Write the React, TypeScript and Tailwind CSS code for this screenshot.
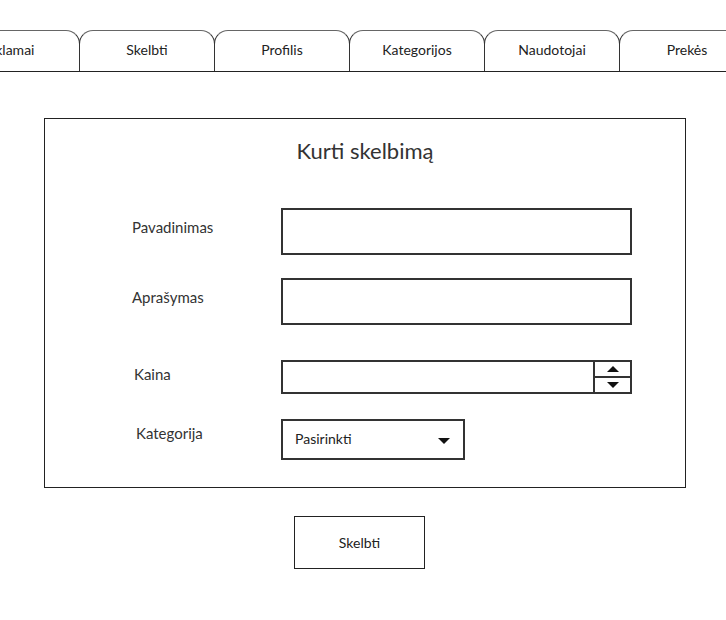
import React from "react";

const tabs = ["Reklamai", "Skelbti", "Profilis", "Kategorijos", "Naudotojai", "Prekės"];

function Tab({ label, first = false }: { label: string; first?: boolean }) {
  return (
    <div
      className={
        "-ml-px flex h-[41px] w-[136px] shrink-0 items-center justify-center rounded-t-[14px] border-x border-t border-x-[#333] border-t-[#666] pb-[3px] text-[14px] text-[#222] " +
        (first ? "pr-[10px]" : "")
      }
    >
      {label}
    </div>
  );
}

function Triangle({ down = false, className = "" }: { down?: boolean; className?: string }) {
  return (
    <svg width="12" height="6" viewBox="0 0 12 6" className={className} aria-hidden="true">
      <path d={down ? "M0 0 L12 0 L6 6 Z" : "M0 6 L12 6 L6 0 Z"} fill="#111" />
    </svg>
  );
}

export default function App() {
  return (
    <div className="h-[620px] w-[726px] overflow-hidden bg-white font-['Lato','Liberation_Sans',sans-serif] text-[#333]">
      {/* Tab strip */}
      <div className="pt-[30px]">
        <div className="flex border-b border-[#222]">
          <div className="-ml-[55px] flex">
            {tabs.map((t, i) => (
              <Tab key={t} label={t} first={i === 0} />
            ))}
          </div>
        </div>
      </div>

      {/* Form panel */}
      <div className="ml-[44px] mt-[46px] w-[642px] border border-[#222] pb-[27px]">
        <h1 className="pt-[18px] text-center text-[22px] leading-[28px] text-[#333]">Kurti skelbimą</h1>

        <div className="mt-[43px] flex flex-col">
          <div className="flex h-[47px]">
            <span className="ml-[87px] mt-[10px] w-[149px] text-[15px] leading-[18px]">Pavadinimas</span>
            <div className="h-[47px] w-[351px] border-2 border-[#333]" />
          </div>

          <div className="mt-[23px] flex h-[47px]">
            <span className="ml-[87px] mt-[10px] w-[149px] text-[15px] leading-[18px]">Aprašymas</span>
            <div className="h-[47px] w-[351px] border-2 border-[#333]" />
          </div>

          <div className="mt-[35px] flex h-[34px]">
            <span className="ml-[89px] mt-[5px] w-[147px] text-[15px] leading-[18px]">Kaina</span>
            <div className="flex h-[34px] w-[351px] border-2 border-[#333]">
              <div className="flex-1" />
              <div className="flex w-[37px] flex-col border-l-2 border-[#333]">
                <div className="flex flex-1 items-center justify-center border-b-2 border-[#333]">
                  <Triangle />
                </div>
                <div className="flex flex-1 items-center justify-center">
                  <Triangle down />
                </div>
              </div>
            </div>
          </div>

          <div className="mt-[25px] flex h-[41px]">
            <span className="ml-[91px] mt-[5px] w-[145px] text-[15px] leading-[18px]">Kategorija</span>
            <div className="flex h-[41px] w-[184px] items-center justify-between border-2 border-[#333] pl-[12px] pr-[13px] text-[14px] text-[#222]">
              <span className="-mt-[3px]">Pasirinkti</span>
              <Triangle down className="mt-[2px]" />
            </div>
          </div>
        </div>
      </div>

      {/* Submit */}
      <div className="ml-[294px] mt-[28px] flex h-[53px] w-[131px] items-center justify-center border border-[#222] text-[14px] text-[#222]">
        Skelbti
      </div>
    </div>
  );
}
